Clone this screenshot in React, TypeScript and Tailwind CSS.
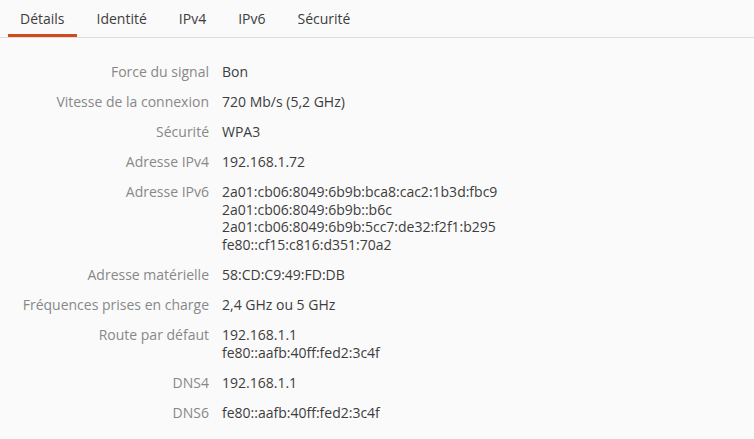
const tabs = ["Détails", "Identité", "IPv4", "IPv6", "Sécurité"];

type Row = {
  label: string;
  values: string[];
};

const rows: Row[] = [
  { label: "Force du signal", values: ["Bon"] },
  { label: "Vitesse de la connexion", values: ["720 Mb/s (5,2 GHz)"] },
  { label: "Sécurité", values: ["WPA3"] },
  { label: "Adresse IPv4", values: ["192.168.1.72"] },
  {
    label: "Adresse IPv6",
    values: [
      "2a01:cb06:8049:6b9b:bca8:cac2:1b3d:fbc9",
      "2a01:cb06:8049:6b9b::b6c",
      "2a01:cb06:8049:6b9b:5cc7:de32:f2f1:b295",
      "fe80::cf15:c816:d351:70a2",
    ],
  },
  { label: "Adresse matérielle", values: ["58:CD:C9:49:FD:DB"] },
  { label: "Fréquences prises en charge", values: ["2,4 GHz ou 5 GHz"] },
  { label: "Route par défaut", values: ["192.168.1.1", "fe80::aafb:40ff:fed2:3c4f"] },
  { label: "DNS4", values: ["192.168.1.1"] },
  { label: "DNS6", values: ["fe80::aafb:40ff:fed2:3c4f"] },
];

export default function App() {
  return (
    <div className="w-[754px] h-[439px] bg-[#fafafa] overflow-hidden font-['Open_Sans',sans-serif] text-[14px]">
      {/* TABS */}
      <div className="flex gap-2 px-2 h-[38px] border-b border-[#dedede]">
        {tabs.map((tab, i) => (
          <div
            key={tab}
            className={`px-3 pt-[3px] flex items-center text-[#3d3d3d] border-b-[3px] ${
              i === 0 ? "border-[#d04a1b]" : "border-transparent"
            }`}
          >
            {tab}
          </div>
        ))}
      </div>

      {/* DETAILS */}
      <div className="pt-[25px] flex flex-col gap-[12.6px]">
        {rows.map((row) => (
          <div key={row.label} className="flex gap-[13px] leading-[17.5px]">
            <div className="w-[209px] text-right text-[#888888] shrink-0">
              {row.label}
            </div>
            <div className="text-[#3d3d3d] flex flex-col">
              {row.values.map((v) => (
                <span key={v}>{v}</span>
              ))}
            </div>
          </div>
        ))}
      </div>
    </div>
  );
}
